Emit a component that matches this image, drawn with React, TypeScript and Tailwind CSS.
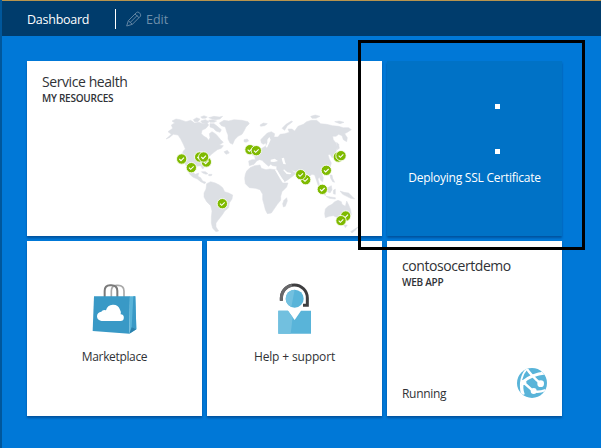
import type { ReactNode } from 'react';

const LAND = [
  // North America
  '24,80 38,70 34,60 44,54 36,48 48,42 60,44 78,50 92,46 104,54 118,52 130,58 140,52 146,60 138,70 126,76 124,86 132,94 140,98 146,106 150,98 148,86 156,80 166,86 172,92 182,104 190,112 178,120 190,122 184,130 172,134 162,142 152,150 142,160 134,168 130,178 132,188 128,192 122,182 110,184 100,190 98,202 106,208 116,204 114,214 122,218 128,228 138,232 134,236 122,230 112,222 98,216 88,206 84,192 76,178 68,166 66,150 70,138 76,132 70,118 62,102 54,90 40,88 28,98 18,102 34,88',
  // Arctic archipelago
  '100,44 110,38 120,42 114,50 104,50',
  '122,48 136,44 148,50 142,54 128,56',
  '122,36 132,32 142,36 136,40 126,40',
  '150,56 162,56 172,64 184,74 180,82 168,78 160,70 150,66',
  '146,46 158,44 170,48 162,52 150,52',
  '146,38 162,34 178,36 188,34 180,42 166,44 156,42',
  // Greenland
  '178,54 192,46 206,48 222,44 246,46 264,50 268,56 258,66 252,78 246,88 234,94 224,104 218,118 210,114 204,102 204,90 200,80 196,66 184,62',
  '192,140 202,136 208,144 198,148',
  '252,104 262,102 266,108 258,112 252,110',
  // Caribbean
  '124,200 136,200 144,206 138,208 128,204',
  '146,208 156,208 154,212 146,212',
  // South America
  '140,236 152,230 166,234 178,240 188,248 194,260 206,264 218,270 216,282 208,294 206,308 194,318 188,328 180,338 174,346 168,354 168,366 176,378 168,380 158,370 154,354 154,336 156,318 152,302 140,290 132,276 132,264 138,252',
  // Eurasia
  '268,182 266,168 276,164 286,164 284,154 276,150 286,142 294,138 302,132 312,126 318,122 318,114 310,118 304,114 302,104 312,94 322,84 334,80 344,86 342,96 354,96 360,88 374,86 388,82 384,72 396,72 404,78 414,64 430,58 440,50 454,46 470,46 482,56 500,58 518,62 536,64 550,68 566,68 574,74 562,82 554,86 562,98 560,110 550,104 546,92 536,88 528,94 518,94 520,104 528,114 532,126 528,142 520,148 522,158 516,158 510,148 504,150 508,162 514,174 510,188 502,198 492,206 486,208 490,218 488,230 482,226 478,216 474,222 478,236 482,246 474,240 468,222 464,210 456,208 448,214 440,224 438,238 430,226 424,208 414,202 402,198 394,194 402,202 408,204 400,212 384,224 374,230 364,216 354,202 350,194 350,184 338,182 332,178 326,184 314,174 306,166 298,164 290,168 282,178',
  '268,134 274,122 282,122 288,134 282,142 270,144',
  '258,132 264,128 266,138 260,140',
  // Arctic islands
  '300,60 310,54 322,56 314,62 302,64',
  '366,70 378,58 394,48 398,50 382,62 374,76',
  '452,34 466,30 480,34 468,40 456,40',
  '524,50 538,48 552,52 540,56',
  // Africa
  '260,198 270,188 284,182 300,180 304,190 318,194 330,192 346,194 352,206 360,222 368,234 384,234 380,246 366,260 362,274 362,286 352,298 344,310 334,324 322,326 316,314 312,298 308,284 308,268 300,254 286,250 268,248 256,236 254,220 256,208',
  '372,286 380,278 382,288 376,304 370,306 368,296',
  // Japan and Sakhalin
  '530,112 536,118 538,130 532,134',
  '530,166 536,152 546,146 544,156 538,166',
  // South-east Asia and Oceania
  '474,242 488,252 498,264 496,272 484,260',
  '500,250 514,242 516,254 510,264 502,260',
  '498,274 512,276 526,278 526,282 508,280',
  '520,256 526,252 526,268 520,266',
  '510,210 516,210 518,220 524,232 518,230 512,220',
  '540,258 552,262 566,264 576,274 584,282 572,280 560,274 548,268',
  // Australia and New Zealand
  '496,312 504,304 516,298 524,290 534,286 544,290 546,298 556,304 560,288 566,300 572,314 574,328 566,342 556,350 544,350 536,340 520,332 508,334 496,338 494,326',
  '552,360 562,360 556,368',
  '572,380 584,372 594,366 588,374 576,384',
];

const MARKERS: [number, number][] = [
  [65, 162], [94, 188], [119, 156], [139, 171], [131, 156], [187, 296],
  [270, 134], [289, 137], [437, 224], [422, 209], [499, 196], [535, 156],
  [543, 152], [487, 253], [557, 333], [543, 347],
];

function WorldMap() {
  return (
    <svg className="ml-[133px] block h-[131px] w-[210px] shrink-0" viewBox="0 0 630 393">
      <g fill="#dcdfe4" stroke="#dcdfe4" strokeWidth="1.5" strokeLinejoin="round">
        {LAND.map((points) => (
          <polygon key={points} points={points} />
        ))}
      </g>
      <g fill="#fff">
        <path d="M322 104l6-8 4 8-6 14-5 10-4-3 5-12z" />
        <path d="M332 164l12-3 10 7-12 3-10-1z" />
        <path d="M365 160l7-2 3 13 3 7-8-1-3-9z" />
        <path d="M345 195l6-1 14 25 7 9-4 2-12-17z" />
        <path d="M372 193l10 9 12 2-3 4-11-1-10-11z" />
      </g>
      {MARKERS.map(([x, y]) => (
        <g key={`${x}-${y}`} transform={`translate(${x} ${y})`}>
          <circle r="15.5" fill="#7fba00" stroke="#fff" strokeWidth="2.5" />
          <path d="M-7 0l5 5 9-9" fill="none" stroke="#fff" strokeWidth="3.2" />
        </g>
      ))}
    </svg>
  );
}

function MarketplaceIcon() {
  return (
    <svg className="block h-[52px] w-[46px]" viewBox="0 0 138 156">
      <path d="M58 42V24Q58 7 74 7h4q18 0 18 17v18" fill="none" stroke="#a9a9a9" strokeWidth="5" />
      <path d="M38 42V24Q38 7 54 7h4q18 0 18 17v18" fill="none" stroke="#7a7a7a" strokeWidth="6" />
      <path d="M6 40h108l-2 112L2 144z" fill="#3999c6" />
      <path d="M113 40h17l3 99-21 13z" fill="#59b4d9" />
      <path d="M124 40h6l3 99-14-7z" fill="#3999c6" />
      <path d="M119 132l14 7-21 13z" fill="#2a80ac" />
      <path d="M30 114a14 14 0 0 1-2-28q4-7 14-4a22 22 0 0 1 42-2q5 8 2 14a10 10 0 0 1-1 20z" fill="#fff" />
    </svg>
  );
}

function SupportIcon() {
  return (
    <svg className="block h-[52px] w-[34px]" viewBox="0 0 102 156">
      <path d="M10 53V45A39 39 0 0 1 88 45V67H75" fill="none" stroke="#3e3e40" strokeWidth="9" />
      <path d="M10 53V45A39 39 0 0 1 42 7" fill="none" stroke="#68686a" strokeWidth="9" />
      <circle cx="50" cy="47" r="27" fill="#59b4d9" />
      <path d="M50 20a27 27 0 0 0-10 52z" fill="#72c0df" />
      <path d="M1 83h29l20 28 19-28h30v69H1z" fill="#59b4d9" />
      <path d="M1 83h29l14 20-6 49H1z" fill="#72c0df" />
    </svg>
  );
}

function WebAppIcon() {
  return (
    <svg className="block size-[30px]" viewBox="0 0 90 90">
      <defs>
        <clipPath id="globe">
          <circle cx="45" cy="45" r="45" />
        </clipPath>
      </defs>
      <circle cx="45" cy="45" r="45" fill="#59b4d9" />
      <g clipPath="url(#globe)" fill="none" stroke="#fff">
        <path d="M28 0Q42 22 70 46" strokeWidth="7" />
        <path d="M84 15Q45 18 16 43" strokeWidth="9" />
        <path d="M30 2Q4 30 14 78" strokeWidth="5" />
        <path d="M18 42L50 70Q65 74 86 66" strokeWidth="7" />
        <path d="M18 42Q12 60 20 80" strokeWidth="7" />
        <circle cx="20" cy="43" r="8" fill="#fff" stroke="none" />
        <circle cx="71" cy="47" r="10" fill="#fff" stroke="none" />
        <circle cx="50" cy="69" r="9" fill="#fff" stroke="none" />
      </g>
    </svg>
  );
}

function Tile({ className, children }: { className: string; children: ReactNode }) {
  return (
    <div className={`flex h-[175px] flex-col shadow-[0_2px_2px_rgba(0,40,90,0.45)] ${className}`}>
      {children}
    </div>
  );
}

export default function App() {
  return (
    <div className="relative flex h-[448px] w-[601px] flex-col overflow-hidden whitespace-nowrap border-l-2 border-[#00579c] bg-[#0078d7] font-['Open_Sans','Noto_Sans',sans-serif] text-[12px] text-[#303236]">
      <header className="-ml-0.5 flex h-9 shrink-0 items-center border-t border-[#b8944e] bg-[#003c6c] pl-[27px] pt-[3px]">
        <span className="w-[88px] text-[12.5px] leading-5 tracking-[-0.25px] text-white">Dashboard</span>
        <span className="-mt-[2px] h-5 w-px bg-white" />
        <svg className="-mt-[2px] ml-[10px] block size-4" viewBox="0 0 48 48" fill="none" stroke="#6285a3" strokeWidth="3">
          <path d="M2 45l5-16L31 5q4-4 9 0t4 10L19 40zM7 29l12 11M27 9l12 11M12 35L34 13" />
        </svg>
        <span className="ml-[4px] text-[12.5px] leading-5 text-[#6f90ab]">Edit</span>
      </header>

      <main className="ml-[25px] mt-[25px] grid w-[535px] grid-cols-3 gap-[5px]">
        <Tile className="col-span-2 bg-white">
          <div className="h-11 shrink-0 pl-[15px] pt-[11px]">
            <h2 className="text-[14px] leading-5 tracking-[-0.42px]">Service health</h2>
            <p className="text-[10px] font-semibold leading-[13px] tracking-[-0.25px]">MY RESOURCES</p>
          </div>
          <WorldMap />
        </Tile>

        <Tile className="items-center bg-[#0072c6] text-white">
          <div className="ml-[46px] mt-[43px] flex h-[50px] flex-col justify-between">
            <span className="size-[5px] bg-white" />
            <span className="size-[5px] bg-white" />
          </div>
          <p className="mt-[14px] leading-5 tracking-[-0.24px]">Deploying SSL Certificate</p>
        </Tile>

        <Tile className="items-center bg-white pt-[42px]">
          <MarketplaceIcon />
          <p className="mt-[12px] leading-5 tracking-[-0.35px]">Marketplace</p>
        </Tile>

        <Tile className="items-center bg-white pt-[42px]">
          <SupportIcon />
          <p className="mt-[12px] leading-5 tracking-[-0.15px]">Help + support</p>
        </Tile>

        <Tile className="bg-white px-[15px] pb-[18px] pt-[15px]">
          <h2 className="text-[14px] leading-5 tracking-[-0.43px]">contosocertdemo</h2>
          <p className="text-[10px] font-semibold leading-[13px] tracking-[-0.25px]">WEB APP</p>
          <div className="mt-auto flex items-end justify-between">
            <span className="-mb-[6px] leading-5 tracking-[-0.3px]">Running</span>
            <WebAppIcon />
          </div>
        </Tile>
      </main>

      <div className="absolute left-[356px] top-[40px] h-[210px] w-[227px] border-[3px] border-black" />
    </div>
  );
}
